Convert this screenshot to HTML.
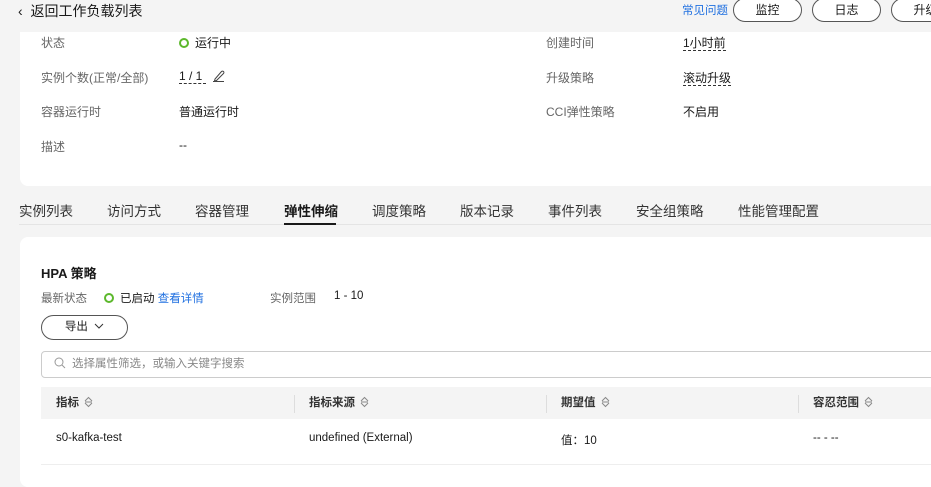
<!DOCTYPE html>
<html><head><meta charset="utf-8"><style>
*{margin:0;padding:0;box-sizing:border-box}
body{width:931px;height:470px;overflow:hidden;background:#f4f4f4;font-family:"Liberation Sans","Noto Sans CJK SC",sans-serif;font-size:12px;color:#191919;position:relative}
.a{position:absolute;white-space:nowrap}
.g{color:#666}
.card{position:absolute;background:#fff;border-radius:8px}
.btn{position:absolute;top:-2px;height:24px;border:1px solid #555;border-radius:12px;font-size:12px;line-height:22px;text-align:center;background:#fff}
.dot{display:inline-block;width:10px;height:10px;border:2.5px solid #5cb82c;border-radius:50%;vertical-align:-1px;margin-right:6px}
.tab{position:absolute;top:200px;font-size:13.5px;color:#333}
.dash{border-bottom:1px dashed #333}
.th{position:absolute;top:394px;font-weight:bold;font-size:11.5px;color:#333}
.th svg{vertical-align:-2px;margin-left:5px}
</style></head><body>
<div class="a" style="left:18px;top:1px;font-size:14px;color:#191919">‹&nbsp; 返回工作负载列表</div>
<div class="a" style="left:682px;top:2px;color:#2070e0;font-size:11.5px">常见问题</div>
<div class="btn" style="left:733px;width:69px">监控</div>
<div class="btn" style="left:812px;width:69px">日志</div>
<div class="btn" style="left:891px;width:69px">升级</div>

<div class="card" style="left:20px;top:32px;width:930px;height:154px;border-radius:0 0 8px 8px"></div>
<div class="a g" style="left:41px;top:34px">状态</div>
<div class="a" style="left:179px;top:34px"><span class="dot"></span>运行中</div>
<div class="a g" style="left:546px;top:34px">创建时间</div>
<div class="a" style="left:683px;top:34px"><span class="dash">1小时前</span></div>
<div class="a g" style="left:41px;top:69px">实例个数(正常/全部)</div>
<div class="a" style="left:179px;top:69px"><span class="dash">1 / 1 </span>&nbsp; <svg width="13" height="13" viewBox="0 0 13 13" style="vertical-align:-2px"><path d="M3 10 L2.5 12 L4.5 11.5 L11.5 4.5 a1.2 1.2 0 0 0 -2 -2 Z M1 12.5 H12" fill="none" stroke="#444" stroke-width="1"/></svg></div>
<div class="a g" style="left:546px;top:69px">升级策略</div>
<div class="a" style="left:683px;top:69px"><span class="dash">滚动升级</span></div>
<div class="a g" style="left:41px;top:103px">容器运行时</div>
<div class="a" style="left:179px;top:103px">普通运行时</div>
<div class="a g" style="left:546px;top:103px">CCI弹性策略</div>
<div class="a" style="left:683px;top:103px">不启用</div>
<div class="a g" style="left:41px;top:138px">描述</div>
<div class="a" style="left:179px;top:138px">--</div>

<div class="tab" style="left:19px">实例列表</div>
<div class="tab" style="left:107px">访问方式</div>
<div class="tab" style="left:195px">容器管理</div>
<div class="tab" style="left:284px;color:#191919;font-weight:bold">弹性伸缩</div>
<div class="a" style="left:19px;top:224px;width:912px;height:1px;background:#e4e4e4"></div>
<div class="a" style="left:284px;top:223px;width:52px;height:2px;background:#191919"></div>
<div class="tab" style="left:372px">调度策略</div>
<div class="tab" style="left:460px">版本记录</div>
<div class="tab" style="left:548px">事件列表</div>
<div class="tab" style="left:636px">安全组策略</div>
<div class="tab" style="left:738px">性能管理配置</div>

<div class="card" style="left:20px;top:237px;width:930px;height:250px"></div>
<div class="a" style="left:41px;top:263px;font-weight:bold;font-size:13px">HPA 策略</div>
<div class="a g" style="left:41px;top:290px;font-size:11.5px">最新状态</div>
<div class="a" style="left:104px;top:290px;font-size:11.5px"><span class="dot"></span>已启动 <span style="color:#2070e0">查看详情</span></div>
<div class="a g" style="left:270px;top:290px;font-size:11.5px">实例范围</div>
<div class="a" style="left:334px;top:290px;font-size:11.5px">1 - 10</div>
<div class="a" style="left:41px;top:315px;width:87px;height:25px;border:1px solid #555;border-radius:13px;text-align:center;line-height:23px;font-size:11.5px">导出 <svg width="10" height="6" viewBox="0 0 10 6" style="vertical-align:1px;margin-left:3px"><path d="M1 1 L5 5 L9 1" fill="none" stroke="#333"/></svg></div>
<div class="a" style="left:41px;top:351px;width:900px;height:27px;border:1px solid #ccc;border-radius:4px;color:#888;line-height:25px;padding-left:12px;font-size:11.5px"><svg width="12" height="12" viewBox="0 0 12 12" style="vertical-align:-2px;margin-right:6px"><circle cx="5" cy="5" r="4" fill="none" stroke="#999"/><path d="M8 8 L11 11" stroke="#999"/></svg>选择属性筛选，或输入关键字搜索</div>
<div class="a" style="left:41px;top:387px;width:900px;height:32px;background:#f4f4f4"></div>
<div class="th" style="left:56px">指标<svg width="9" height="12" viewBox="0 0 9 12"><path d="M1 5 L4.5 1.5 L8 5 M1 7 L4.5 10.5 L8 7 M1 6 H8" fill="none" stroke="#888"/></svg></div>
<div class="a" style="left:294px;top:395px;width:1px;height:18px;background:#ddd"></div>
<div class="th" style="left:309px">指标来源<svg width="9" height="12" viewBox="0 0 9 12"><path d="M1 5 L4.5 1.5 L8 5 M1 7 L4.5 10.5 L8 7 M1 6 H8" fill="none" stroke="#888"/></svg></div>
<div class="a" style="left:546px;top:395px;width:1px;height:18px;background:#ddd"></div>
<div class="th" style="left:561px">期望值<svg width="9" height="12" viewBox="0 0 9 12"><path d="M1 5 L4.5 1.5 L8 5 M1 7 L4.5 10.5 L8 7 M1 6 H8" fill="none" stroke="#888"/></svg></div>
<div class="a" style="left:798px;top:395px;width:1px;height:18px;background:#ddd"></div>
<div class="th" style="left:813px">容忍范围<svg width="9" height="12" viewBox="0 0 9 12"><path d="M1 5 L4.5 1.5 L8 5 M1 7 L4.5 10.5 L8 7 M1 6 H8" fill="none" stroke="#888"/></svg></div>
<div class="a" style="left:56px;top:432px;font-size:11.5px">s0-kafka-test</div>
<div class="a" style="left:309px;top:432px;font-size:11.5px">undefined (External)</div>
<div class="a" style="left:561px;top:432px;font-size:11.5px">值：10</div>
<div class="a" style="left:813px;top:432px;font-size:11.5px">-- - --</div>
<div class="a" style="left:41px;top:464px;width:900px;height:1px;background:#eee"></div>
</body></html>
